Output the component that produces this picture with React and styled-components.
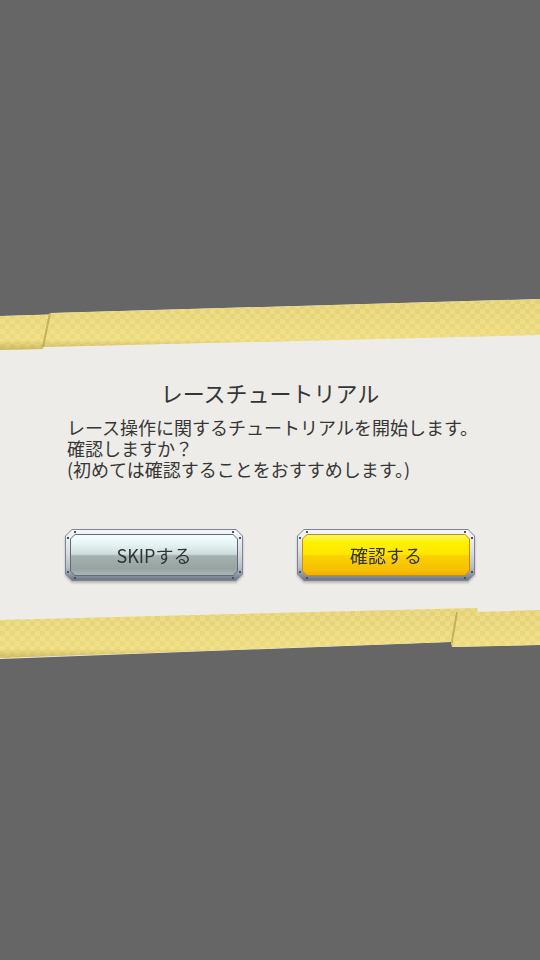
import styled, { createGlobalStyle } from "styled-components";

const GlobalStyle = createGlobalStyle`
  html, body {
    margin: 0;
    padding: 0;
    background: #666666;
  }
  body {
    font-family: "Noto Sans CJK JP", "Noto Sans", sans-serif;
  }
`;

const App = () => {
  return (
    <Screen>
      <GlobalStyle />
      <Dialog>
        <TopTape />
        <Body>
          <Title>レースチュートリアル</Title>
          <Message>
            <Line>レース操作に関するチュートリアルを開始します。</Line>
            <Line>確認しますか？</Line>
            <Line>(初めては確認することをおすすめします。)</Line>
          </Message>
          <Buttons>
            <GameButton>
              <Outline>
                <Bezel>
                  <Rim $tone="silver">
                    <Face $tone="silver">SKIPする</Face>
                  </Rim>
                </Bezel>
              </Outline>
            </GameButton>
            <GameButton>
              <Outline>
                <Bezel>
                  <Rim $tone="gold">
                    <Face $tone="gold">確認する</Face>
                  </Rim>
                </Bezel>
              </Outline>
            </GameButton>
          </Buttons>
        </Body>
        <BottomTape />
      </Dialog>
    </Screen>
  );
};

export default App;

const octagon = (c) =>
  `polygon(${c}px 0, calc(100% - ${c}px) 0, 100% ${c}px, 100% calc(100% - ${c}px), calc(100% - ${c}px) 100%, ${c}px 100%, 0 calc(100% - ${c}px), 0 ${c}px)`;

const tapeFill = `
  background-color: #e8d67e;
  background-image:
    linear-gradient(180deg, rgba(255, 255, 255, 0) 0%, rgba(255, 240, 150, 0.35) 80%, rgba(150, 130, 40, 0.35) 100%),
    repeating-conic-gradient(rgba(205, 185, 90, 0.2) 0 25%, rgba(255, 245, 170, 0.12) 0 50%);
  background-size: 100% 100%, 10px 10px;
`;

const Screen = styled.div`
  width: 540px;
  height: 960px;
  background: #666666;
  padding-top: 299px;
  box-sizing: border-box;
  overflow: hidden;
`;

const Dialog = styled.div`
  width: 540px;
  display: flex;
  flex-direction: column;
  background: #edece8;
  clip-path: polygon(0 17px, 49px 15.5px, 50px 14px, 100% 0, 100% 346px, 452px 348px, 451px 343px, 0 360px);
`;

const TopTape = styled.div`
  position: relative;
  height: 51px;
  ${tapeFill}
  clip-path: polygon(0 17px, 49px 15.5px, 50px 14px, 100% 0, 100% 36px, 43px 48px, 43px 50px, 0 51px);

  &::after {
    content: "";
    position: absolute;
    inset: 0;
    background: rgba(170, 150, 60, 0.6);
    clip-path: polygon(49px 14px, 51px 14px, 44px 48px, 42px 48px);
  }
`;

const BottomTape = styled.div`
  position: relative;
  height: 53px;
  ${tapeFill}
  clip-path: polygon(0 14px, 477px 2px, 478px 6px, 100% 4px, 100% 39px, 452px 41px, 451px 36px, 0 52px);

  &::after {
    content: "";
    position: absolute;
    inset: 0;
    background: rgba(170, 150, 60, 0.6);
    clip-path: polygon(456px 6px, 458px 6px, 452px 41px, 450px 41px);
  }
`;

const Body = styled.div`
  height: 256px;
  box-sizing: border-box;
  padding: 30px 0 25px;
  display: flex;
  flex-direction: column;
  align-items: center;
  color: #363636;
`;

const Title = styled.div`
  font-size: 22px;
  line-height: 24px;
  text-align: center;
`;

const Message = styled.div`
  align-self: stretch;
  margin-top: 13px;
  padding-left: 67px;
  font-size: 18px;
`;

const Line = styled.div`
  height: 21px;
  line-height: 21px;
  white-space: nowrap;
`;

const Buttons = styled.div`
  margin-top: 49px;
  display: flex;
  justify-content: center;
  gap: 54px;
`;

const GameButton = styled.button`
  width: 178px;
  height: 52px;
  padding: 0;
  border: none;
  background: none;
  font: inherit;
  filter: drop-shadow(0 2px 1px rgba(0, 0, 0, 0.22));
`;

const Outline = styled.div`
  height: 100%;
  box-sizing: border-box;
  padding: 1px;
  background: #7c8494;
  clip-path: ${octagon(7)};
`;

const rivet = (x, y) =>
  `radial-gradient(circle at ${x} ${y}, #4c5262 0 0.9px, transparent 1.4px)`;

const Bezel = styled.div`
  height: 100%;
  box-sizing: border-box;
  padding: 4px;
  clip-path: ${octagon(6)};
  background:
    ${rivet("9px", "2px")},
    ${rivet("calc(100% - 9px)", "2px")},
    ${rivet("2px", "8px")},
    ${rivet("calc(100% - 2px)", "8px")},
    ${rivet("2px", "calc(100% - 8px)")},
    ${rivet("calc(100% - 2px)", "calc(100% - 8px)")},
    ${rivet("9px", "calc(100% - 2px)")},
    ${rivet("calc(100% - 9px)", "calc(100% - 2px)")},
    linear-gradient(180deg, #f4f6f9 0%, #dde1e6 40%, #b8bec8 75%, #6f7788 100%);
`;

const Rim = styled.div`
  height: 100%;
  box-sizing: border-box;
  padding: 1px;
  clip-path: ${octagon(5)};
  background: ${(p) => (p.$tone === "gold" ? "#d08c00" : "#5f6a76")};
`;

const Face = styled.div`
  height: 100%;
  display: flex;
  align-items: center;
  justify-content: center;
  clip-path: ${octagon(4)};
  font-size: 18px;
  color: #2f3434;
  background: ${(p) =>
    p.$tone === "gold"
      ? "linear-gradient(180deg, #fff66a 0%, #fff200 18%, #ffe600 48%, #fbd200 52%, #f5bf00 88%, #f0b000 100%)"
      : "linear-gradient(180deg, #f6ffff 0%, #e4f2f2 25%, #cddbdb 48%, #a6b2b2 52%, #97a3a3 85%, #aab6b6 100%)"};
`;
